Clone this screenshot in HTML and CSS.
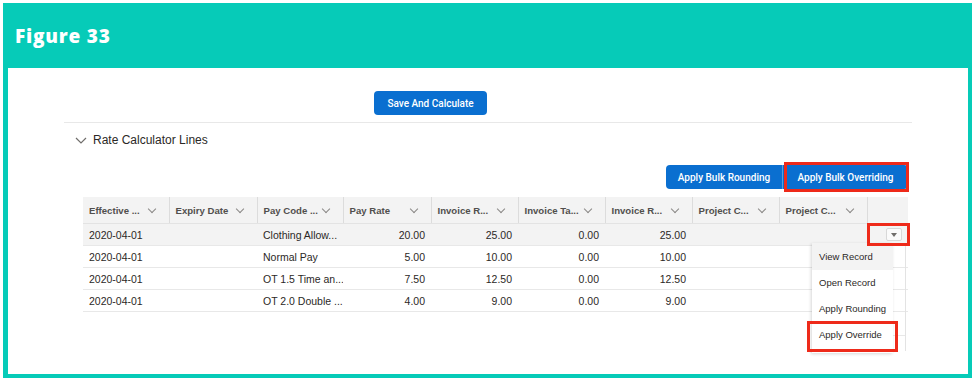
FILE: index.html
```html
<!DOCTYPE html>
<html lang="en">
<head>
  <meta charset="UTF-8">
  <title>Figure 33</title>
  <link rel="stylesheet" href="styles.css">
</head>
<body>
  <div class="frame">
    <header class="fig-head">
      <h1>Figure 33</h1>
    </header>

    <div class="content">
      <div class="panel">
        <div class="save-row">
          <button class="btn">Save And Calculate</button>
        </div>

        <div class="section-title">
          <svg class="caret" width="12" height="7" viewBox="0 0 12 7"><polyline points="1,1 6,6 11,1" fill="none" stroke="#706e6b" stroke-width="1.2"/></svg>
          <span>Rate Calculator Lines</span>
        </div>

        <div class="bulk-row">
          <div class="btn-group">
            <button class="btn grp-left">Apply Bulk Rounding</button>
            <button class="btn grp-right">Apply Bulk Overriding</button>
            <div class="mark mark-bulk"></div>
          </div>
        </div>

        <div class="grid-wrap">
          <table class="grid">
            <colgroup>
              <col style="width:86px"><col style="width:88px"><col style="width:86px"><col style="width:88px">
              <col style="width:87px"><col style="width:87px"><col style="width:87px"><col style="width:87px">
              <col style="width:88px"><col style="width:41px">
            </colgroup>
            <thead>
              <tr>
                <th>Effective ... <i class="chev"></i></th>
                <th>Expiry Date <i class="chev"></i></th>
                <th>Pay Code ... <i class="chev"></i></th>
                <th>Pay Rate <i class="chev"></i></th>
                <th>Invoice R... <i class="chev"></i></th>
                <th>Invoice Ta... <i class="chev"></i></th>
                <th>Invoice R... <i class="chev"></i></th>
                <th>Project C... <i class="chev"></i></th>
                <th>Project C... <i class="chev"></i></th>
                <th class="last"></th>
              </tr>
            </thead>
            <tbody>
              <tr class="active">
                <td>2020-04-01</td><td></td><td>Clothing Allow...</td>
                <td class="num">20.00</td><td class="num">25.00</td><td class="num">0.00</td><td class="num">25.00</td>
                <td></td><td></td>
                <td class="act"><span class="menu-btn"><svg width="6" height="4" viewBox="0 0 6 4"><polygon points="0,0 6,0 3,4" fill="#706e6b"/></svg></span></td>
              </tr>
              <tr>
                <td>2020-04-01</td><td></td><td>Normal Pay</td>
                <td class="num">5.00</td><td class="num">10.00</td><td class="num">0.00</td><td class="num">10.00</td>
                <td></td><td></td><td></td>
              </tr>
              <tr>
                <td>2020-04-01</td><td></td><td>OT 1.5 Time an...</td>
                <td class="num">7.50</td><td class="num">12.50</td><td class="num">0.00</td><td class="num">12.50</td>
                <td></td><td></td><td></td>
              </tr>
              <tr>
                <td>2020-04-01</td><td></td><td>OT 2.0 Double ...</td>
                <td class="num">4.00</td><td class="num">9.00</td><td class="num">0.00</td><td class="num">9.00</td>
                <td></td><td></td><td></td>
              </tr>
            </tbody>
          </table>

          <!-- scroller edge that shows beside the open menu -->
          <div class="tail"></div>

          <ul class="row-menu">
            <li class="hover">View Record</li>
            <li>Open Record</li>
            <li>Apply Rounding</li>
            <li>Apply Override</li>
          </ul>

          <div class="mark mark-toggle"></div>
          <div class="mark mark-override"></div>
        </div>
      </div>
    </div>
  </div>
</body>
</html>
```

FILE: styles.css
```css
body {
  margin: 0;
  background: #fff;
  font-family: 'Liberation Sans', Arial, sans-serif;
  color: #3e3e3c;
}
.frame { /* teal figure frame */
  margin: 3px 4px 4px 3px;
  width: 969px;
  height: 375px;
  background: #06cbb8;
  display: flex;
  flex-direction: column;
}
.fig-head {
  height: 65px;
  display: flex;
  align-items: center;
  padding-left: 12px;
}
.fig-head h1 {
  margin: 0;
  font-family: 'Open Sans', sans-serif;
  font-weight: 800;
  font-size: 19px;
  color: #fff;
  letter-spacing: 0.8px;
}
.content {
  background: #fff;
  margin: 0 4px 4px 5px;
  flex: 1;
}
.panel {
  margin-left: 56px;
  width: 848px;
}
.save-row {
  padding: 23px 0 7px 310px;
  border-bottom: 1px solid #e8e8e8;
}
.btn {
  background: #0a6fd0;
  color: #fff;
  border: none;
  border-radius: 4px;
  height: 24px;
  padding: 0;
  font-family: Roboto, 'Liberation Sans', sans-serif;
  font-weight: 500;
  font-size: 10px;
  cursor: pointer;
}
.save-row .btn {
  width: 113px;
}
.section-title {
  display: flex;
  align-items: center;
  gap: 6px;
  margin: 10px 0 0 11px;
  height: 14px;
  font-size: 12px;
  color: #2b2826;
}
.bulk-row {
  display: flex;
  justify-content: flex-end;
  margin-top: 18px;
  padding-right: 4px;
}
.btn-group {
  position: relative;
  display: flex;
}
.grp-left {
  width: 117px;
  border-radius: 4px 0 0 4px;
  border-right: 1px solid #5a9fe0;
}
.grp-right {
  width: 125px;
  border-radius: 0 4px 4px 0;
}
.mark { /* red highlight boxes */
  position: absolute;
  border: 3px solid #ee2a1a;
  box-sizing: border-box;
}
.mark-bulk {
  left: 118px;
  top: -3px;
  width: 125px;
  height: 30px;
}
.grid-wrap {
  position: relative;
  margin: 8px 0 0 19px;
  width: 825px;
}
.grid {
  border-collapse: collapse;
  table-layout: fixed;
  width: 825px;
  font-size: 10.5px;
}
.grid th {
  background: #f3f3f3;
  height: 26px;
  padding: 0 6px;
  text-align: left;
  font-size: 9.6px;
  font-weight: 700;
  color: #514f4d;
  border-bottom: 1px solid #e3e3e3;
  border-left: 1px solid #dcdcdc;
  white-space: nowrap;
  position: relative;
}
.grid th:first-child {
  border-left: none;
}
.chev { /* sort chevron */
  position: absolute;
  right: 14px;
  top: 9px;
  width: 5px;
  height: 5px;
  border-right: 1px solid #8a8886;
  border-bottom: 1px solid #8a8886;
  transform: rotate(45deg);
}
.grid td {
  height: 21px;
  padding: 0 6px;
  border-bottom: 1px solid #e8e8e8;
  white-space: nowrap;
  overflow: hidden;
  color: #2b2826;
}
.grid td.num {
  text-align: right;
}
.grid tr.active td {
  background: #f3f3f3;
}
.grid td.act {
  padding: 0;
  text-align: center;
}
.menu-btn {
  display: inline-flex;
  align-items: center;
  justify-content: center;
  width: 14px;
  height: 11px;
  margin-left: 13px;
  border: 1px solid #d8d8d8;
  border-radius: 2px;
  background: #fafafa;
  vertical-align: middle;
}
.tail {
  position: absolute;
  left: 729px;
  top: 49px;
  width: 94px;
  height: 105px;
  border-right: 1px solid #e3e3e3;
  box-sizing: border-box;
}
.tail::after {
  content: '';
  position: absolute;
  left: 0;
  right: 0;
  top: 89px;
  border-top: 1px solid #e8e8e8;
}
.row-menu { /* row action menu */
  position: absolute;
  left: 729px;
  top: 46px;
  width: 81px;
  margin: 0;
  padding: 0 0 5px;
  list-style: none;
  background: #fff;
  box-shadow: -1px 1px 3px rgba(0, 0, 0, 0.16);
  font-size: 9.5px;
  color: #2b2826;
}
.row-menu li {
  height: 26px;
  line-height: 26px;
  padding-left: 7px;
}
.row-menu li.hover {
  background: #f3f3f3;
  height: 27px;
  line-height: 27px;
}
.mark-toggle {
  left: 784px;
  top: 26px;
  width: 43px;
  height: 23px;
}
.mark-override {
  left: 724px;
  top: 124px;
  width: 91px;
  height: 31px;
}
```
